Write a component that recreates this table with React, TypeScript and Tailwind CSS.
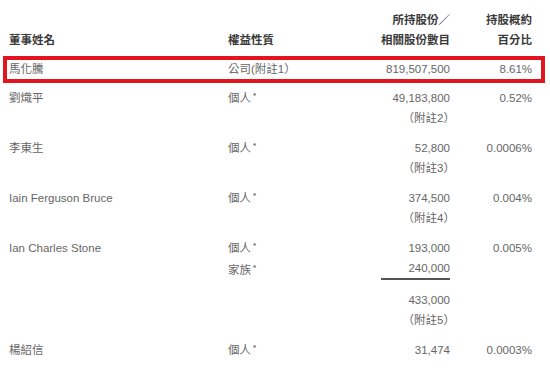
const Star = () => (
  <span className="relative -top-[4px] ml-[2px] text-[8px] font-bold">*</span>
)

const cellName = "w-[219px] shrink-0"
const cellNature = "w-[120px] shrink-0"
const cellShares = "w-[102px] shrink-0 text-right"
const cellPct = "w-[82px] shrink-0 text-right"

type Row = {
  name: string
  nature: React.ReactNode
  shares: string
  note: string
  pct: string
}

const rows: Row[] = [
  { name: "劉熾平", nature: "個人", shares: "49,183,800", note: "（附註2）", pct: "0.52%" },
  { name: "李東生", nature: "個人", shares: "52,800", note: "（附註3）", pct: "0.0006%" },
  { name: "Iain Ferguson Bruce", nature: "個人", shares: "374,500", note: "（附註4）", pct: "0.004%" },
]

export default function App() {
  return (
    <div className="w-[550px] h-[369px] overflow-hidden bg-white pt-[10px] pl-[3px] pr-[5px] text-[11.5px] leading-5 text-[#666] font-['Liberation_Sans','Noto_Sans_CJK_TC',sans-serif]">
      {/* header */}
      <div className="flex items-end pl-[6px] pr-[13px] font-bold text-[#3a3a3a]">
        <div className={cellName}>董事姓名</div>
        <div className={cellNature}>權益性質</div>
        <div className={cellShares}>
          <div>所持股份／</div>
          <div>相關股份數目</div>
        </div>
        <div className={cellPct}>
          <div>持股概約</div>
          <div>百分比</div>
        </div>
      </div>

      {/* highlighted row */}
      <div className="mt-[6px] flex border-4 border-[#e2141d] pl-[2px] pr-[9px] leading-[19px]">
        <div className={cellName}>馬化騰</div>
        <div className={cellNature}>公司(附註1）</div>
        <div className={cellShares}>819,507,500</div>
        <div className={cellPct}>8.61%</div>
      </div>

      <div className="mt-[5px] flex flex-col gap-[10px]">
        {rows.map((r) => (
          <div key={r.name} className="flex pl-[6px] pr-[13px]">
            <div className={cellName}>{r.name}</div>
            <div className={cellNature}>
              {r.nature}
              <Star />
            </div>
            <div className={cellShares}>
              <div>{r.shares}</div>
              <div className="-mr-[5px]">{r.note}</div>
            </div>
            <div className={cellPct}>{r.pct}</div>
          </div>
        ))}

        <div className="flex pl-[6px] pr-[13px]">
          <div className={cellName}>Ian Charles Stone</div>
          <div className={cellNature}>
            <div>
              個人
              <Star />
            </div>
            <div>
              家族
              <Star />
            </div>
          </div>
          <div className={cellShares}>
            <div>193,000</div>
            <div className="ml-auto w-[69px] border-b-2 border-[#555]">240,000</div>
            <div className="mt-[10px]">433,000</div>
            <div className="-mr-[5px]">（附註5）</div>
          </div>
          <div className={cellPct}>0.005%</div>
        </div>

        <div className="flex pl-[6px] pr-[13px]">
          <div className={cellName}>楊紹信</div>
          <div className={cellNature}>
            個人
            <Star />
          </div>
          <div className={cellShares}>31,474</div>
          <div className={cellPct}>0.0003%</div>
        </div>
      </div>
    </div>
  )
}
